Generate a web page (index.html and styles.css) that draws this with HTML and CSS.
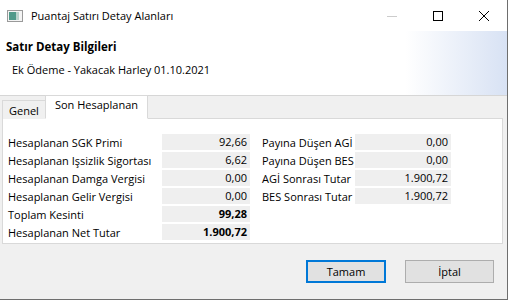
FILE: index.html
```html
<!DOCTYPE html>
<html lang="tr">
<head>
    <meta charset="UTF-8">
    <title>Puantaj Satırı Detay Alanları</title>
    <link rel="stylesheet" href="styles.css">
</head>
<body>
    <div class="window">
        <div class="titlebar">
            <svg class="app-icon" width="16" height="12" viewBox="0 0 16 12">
                <rect x="0.5" y="0.5" width="15" height="11" fill="#f4f4f4" stroke="#9a9a9a"/>
                <rect x="2" y="2" width="7" height="8" fill="#4f9a8a"/>
                <rect x="9" y="2" width="3" height="8" fill="#b9d3cc"/>
            </svg>
            <span class="title">Puantaj Satırı Detay Alanları</span>
            <div class="caption-buttons">
                <span class="cap-btn min"><svg width="10" height="10" viewBox="0 0 10 10"><line x1="0" y1="5.5" x2="10" y2="5.5" stroke="#cccccc"/></svg></span>
                <span class="cap-btn"><svg width="10" height="10" viewBox="0 0 10 10"><rect x="0.5" y="0.5" width="9" height="9" fill="none" stroke="#000"/></svg></span>
                <span class="cap-btn"><svg width="10" height="10" viewBox="0 0 10 10"><path d="M0 0 L10 10 M10 0 L0 10" stroke="#000" stroke-width="1"/></svg></span>
            </div>
        </div>

        <div class="header">
            <h1>Satır Detay Bilgileri</h1>
            <p class="subtitle">Ek Ödeme - Yakacak Harley 01.10.2021</p>
        </div>

        <div class="body">
            <div class="tabbar">
                <div class="tab">Genel</div>
                <div class="tab active">Son Hesaplanan</div>
            </div>
            <div class="tabpanel">
                <div class="col col-left">
                    <div class="row"><span class="lbl">Hesaplanan SGK Primi</span><span class="val">92,66</span></div>
                    <div class="row"><span class="lbl">Hesaplanan Işsizlik Sigortası</span><span class="val">6,62</span></div>
                    <div class="row"><span class="lbl">Hesaplanan Damga Vergisi</span><span class="val">0,00</span></div>
                    <div class="row"><span class="lbl">Hesaplanan Gelir Vergisi</span><span class="val">0,00</span></div>
                    <div class="row"><span class="lbl">Toplam Kesinti</span><span class="val bold">99,28</span></div>
                    <div class="row"><span class="lbl">Hesaplanan Net Tutar</span><span class="val bold">1.900,72</span></div>
                </div>
                <div class="col col-right">
                    <div class="row"><span class="lbl">Payına Düşen AGİ</span><span class="val">0,00</span></div>
                    <div class="row"><span class="lbl">Payına Düşen BES</span><span class="val">0,00</span></div>
                    <div class="row"><span class="lbl">AGİ Sonrası Tutar</span><span class="val">1.900,72</span></div>
                    <div class="row"><span class="lbl">BES Sonrası Tutar</span><span class="val">1.900,72</span></div>
                </div>
            </div>
            <div class="footer">
                <button class="btn default">Tamam</button>
                <button class="btn">İptal</button>
            </div>
        </div>
    </div>
</body>
</html>
```

FILE: styles.css
```css
body {
    margin: 0;
    padding: 0;
    background: #ffffff;
    font-family: "Open Sans", "Noto Sans", sans-serif;
    font-size: 11px;
    color: #000;
}
.window {
    width: 507px;
    height: 299px;
    border-right: 1px solid #6e6e6e;
    border-bottom: 1px solid #6e6e6e;
    background: #f0f0f0;
    display: flex;
    flex-direction: column;
    overflow: hidden;
}
.titlebar {
    height: 31px;
    background: #fff;
    display: flex;
    align-items: center;
    flex-shrink: 0;
}
.app-icon {
    margin-left: 7px;
    margin-right: 8px;
}
.title {
    flex: 1;
    white-space: nowrap;
}
.caption-buttons {
    display: flex;
    height: 31px;
}
.cap-btn {
    width: 46px;
    display: flex;
    align-items: center;
    justify-content: center;
}
.header {
    height: 65px;
    flex-shrink: 0;
    background: linear-gradient(to right, #ffffff 0%, #ffffff 80%, #d8e2f4 100%);
    border-bottom: 1px solid #d6d6d6;
    padding-left: 6px;
    box-sizing: border-box;
}
.header h1 {
    margin: 0;
    padding-top: 7px;
    font-size: 11.5px;
    font-weight: bold;
    line-height: 18px;
}
.subtitle {
    margin: 5px 0 0 6px;
    line-height: 17px;
}
.body {
    flex: 1;
    padding: 0 4px 0 2px;
    display: flex;
    flex-direction: column;
}
.tabbar {
    display: flex;
    align-items: flex-end;
    height: 23px;
    margin-bottom: -1px;
    position: relative;
    z-index: 1;
}
.tab {
    height: 19px;
    line-height: 19px;
    padding: 0 6px;
    border: 1px solid #d9d9d9;
    border-bottom: none;
    background: #f0f0f0;
    box-sizing: border-box;
}
.tab.active {
    height: 24px;
    line-height: 18px;
    padding: 0 9px;
    background: #fff;
    margin-left: -1px;
    border-bottom: 1px solid #fff;
}
.tabpanel {
    height: 126px;
    background: #fff;
    border: 1px solid #d9d9d9;
    display: flex;
    padding: 15px 0 0 5px;
    box-sizing: border-box;
}
.col {
    display: flex;
    flex-direction: column;
    gap: 2px;
}
.col-left {
    width: 254px;
}
.row {
    display: flex;
    height: 16px;
    align-items: center;
    white-space: nowrap;
}
.col-left .lbl {
    width: 154px;
}
.col-right .lbl {
    width: 93px;
}
.val {
    background: #efefef;
    height: 16px;
    line-height: 16px;
    text-align: right;
    padding-right: 3px;
    box-sizing: border-box;
}
.col-left .val {
    width: 88px;
}
.col-right .val {
    width: 96px;
}
.val.bold {
    font-weight: bold;
}
.footer {
    display: flex;
    justify-content: flex-end;
    gap: 19px;
    padding: 16px 9px 0 0;
}
.btn {
    font-family: inherit;
    font-size: 11px;
    height: 23px;
    width: 89px;
    background: #e1e1e1;
    border: 1px solid #adadad;
    padding: 0;
}
.btn.default {
    width: 80px;
    border: 2px solid #0078d7;
}
```
